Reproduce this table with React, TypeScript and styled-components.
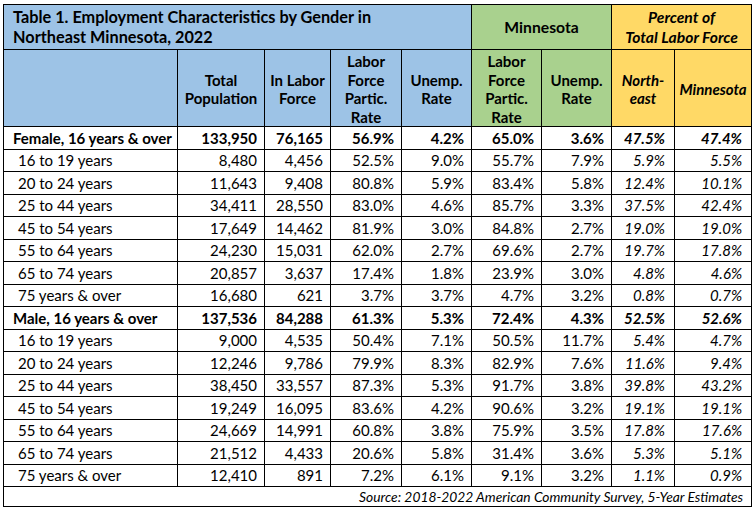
import React from "react";
import styled, { createGlobalStyle } from "styled-components";

const GlobalStyle = createGlobalStyle`
  html, body { margin: 0; padding: 0; background: #ffffff; }
  body { font-family: Lato, "Liberation Sans", sans-serif; color: #000; }
`;

const BLUE = "#9dc3e6";
const GREEN = "#a9d18e";
const YELLOW = "#ffd966";

const Page = styled.div`
  padding: 4px 0 0 3px;
`;

const Table = styled.table`
  border-collapse: collapse;
  table-layout: fixed;
  width: 749px;
  font-family: Lato, "Liberation Sans", sans-serif;
  font-size: 15px;
  color: #000;
`;

const TitleRow = styled.tr`
  height: 45px;
`;

const HeadRow = styled.tr`
  height: 76px;
`;

const DataRow = styled.tr`
  height: 22.5px;
`;

const SourceRow = styled.tr`
  height: 19.5px;
`;

type Tone = "blue" | "green" | "yellow";
const toneColor = (t?: Tone) =>
  t === "blue" ? BLUE : t === "green" ? GREEN : t === "yellow" ? YELLOW : "#fff";

const TitleCell = styled.th<{ $tone: Tone; $align?: "left" | "center"; $italic?: boolean }>`
  background: ${(p) => toneColor(p.$tone)};
  border: 1px solid #000;
  text-align: ${(p) => p.$align ?? "center"};
  vertical-align: middle;
  font-weight: 700;
  font-style: ${(p) => (p.$italic ? "italic" : "normal")};
  font-size: ${(p) => (p.$align === "left" ? "16.3px" : "15.7px")};
  line-height: 20.5px;
  padding: 0 0 0 ${(p) => (p.$align === "left" ? "9px" : "0")};
`;

const HeadCell = styled.th<{ $tone: Tone; $italic?: boolean }>`
  background: ${(p) => toneColor(p.$tone)};
  border: 1px solid #000;
  text-align: center;
  vertical-align: middle;
  font-weight: 700;
  font-style: ${(p) => (p.$italic ? "italic" : "normal")};
  line-height: 18.5px;
  padding: 2px 2px 0;
`;

const LabelCell = styled.td<{ $bold?: boolean }>`
  border: 1px solid #000;
  text-align: left;
  white-space: nowrap;
  font-weight: ${(p) => (p.$bold ? 700 : 400)};
  padding: 0 0 0 ${(p) => (p.$bold ? "9px" : "14px")};
`;

const NumCell = styled.td<{ $bold?: boolean; $italic?: boolean }>`
  border: 1px solid #000;
  text-align: right;
  white-space: nowrap;
  font-weight: ${(p) => (p.$bold ? 700 : 400)};
  font-style: ${(p) => (p.$italic ? "italic" : "normal")};
  padding: 0 ${(p) => (p.$italic ? "9px" : "7px")} 0 0;
`;

const SourceCell = styled.td`
  border: 1px solid #000;
  text-align: right;
  font-style: italic;
  font-size: 13.8px;
  padding: 0 8px 0 0;
`;

type Row = { label: string; total: boolean; v: string[] };

const raw: [string, string][] = [
  ["Female, 16 years & over", "133,950|76,165|56.9%|4.2%|65.0%|3.6%|47.5%|47.4%"],
  ["16 to 19 years", "8,480|4,456|52.5%|9.0%|55.7%|7.9%|5.9%|5.5%"],
  ["20 to 24 years", "11,643|9,408|80.8%|5.9%|83.4%|5.8%|12.4%|10.1%"],
  ["25 to 44 years", "34,411|28,550|83.0%|4.6%|85.7%|3.3%|37.5%|42.4%"],
  ["45 to 54 years", "17,649|14,462|81.9%|3.0%|84.8%|2.7%|19.0%|19.0%"],
  ["55 to 64 years", "24,230|15,031|62.0%|2.7%|69.6%|2.7%|19.7%|17.8%"],
  ["65 to 74 years", "20,857|3,637|17.4%|1.8%|23.9%|3.0%|4.8%|4.6%"],
  ["75 years & over", "16,680|621|3.7%|3.7%|4.7%|3.2%|0.8%|0.7%"],
  ["Male, 16 years & over", "137,536|84,288|61.3%|5.3%|72.4%|4.3%|52.5%|52.6%"],
  ["16 to 19 years", "9,000|4,535|50.4%|7.1%|50.5%|11.7%|5.4%|4.7%"],
  ["20 to 24 years", "12,246|9,786|79.9%|8.3%|82.9%|7.6%|11.6%|9.4%"],
  ["25 to 44 years", "38,450|33,557|87.3%|5.3%|91.7%|3.8%|39.8%|43.2%"],
  ["45 to 54 years", "19,249|16,095|83.6%|4.2%|90.6%|3.2%|19.1%|19.1%"],
  ["55 to 64 years", "24,669|14,991|60.8%|3.8%|75.9%|3.5%|17.8%|17.6%"],
  ["65 to 74 years", "21,512|4,433|20.6%|5.8%|31.4%|3.6%|5.3%|5.1%"],
  ["75 years & over", "12,410|891|7.2%|6.1%|9.1%|3.2%|1.1%|0.9%"],
];

const rows: Row[] = raw.map(([label, vals]) => ({
  label,
  total: label.includes("16 years & over"),
  v: vals.split("|"),
}));

const widths = [174, 87, 66, 71, 70, 70, 70, 63, 77];

export default function App() {
  return (
    <>
      <GlobalStyle />
      <Page>
        <Table>
          <colgroup>
            {widths.map((w, i) => (
              <col key={i} style={{ width: w }} />
            ))}
          </colgroup>
          <thead>
            <TitleRow>
              <TitleCell $tone="blue" $align="left" colSpan={5}>
                Table 1. Employment Characteristics by Gender in
                <br />
                Northeast Minnesota, 2022
              </TitleCell>
              <TitleCell $tone="green" colSpan={2}>
                Minnesota
              </TitleCell>
              <TitleCell $tone="yellow" $italic colSpan={2}>
                Percent of
                <br />
                Total Labor Force
              </TitleCell>
            </TitleRow>
            <HeadRow>
              <HeadCell $tone="blue" />
              <HeadCell $tone="blue">
                Total
                <br />
                Population
              </HeadCell>
              <HeadCell $tone="blue">
                In Labor
                <br />
                Force
              </HeadCell>
              <HeadCell $tone="blue">
                Labor
                <br />
                Force
                <br />
                Partic.
                <br />
                Rate
              </HeadCell>
              <HeadCell $tone="blue">
                Unemp.
                <br />
                Rate
              </HeadCell>
              <HeadCell $tone="green">
                Labor
                <br />
                Force
                <br />
                Partic.
                <br />
                Rate
              </HeadCell>
              <HeadCell $tone="green">
                Unemp.
                <br />
                Rate
              </HeadCell>
              <HeadCell $tone="yellow" $italic>
                North-
                <br />
                east
              </HeadCell>
              <HeadCell $tone="yellow" $italic>
                Minnesota
              </HeadCell>
            </HeadRow>
          </thead>
          <tbody>
            {rows.map((r, i) => (
              <DataRow key={i}>
                <LabelCell $bold={r.total}>{r.label}</LabelCell>
                {r.v.map((val, j) => (
                  <NumCell key={j} $bold={r.total} $italic={j >= 6}>
                    {val}
                  </NumCell>
                ))}
              </DataRow>
            ))}
            <SourceRow>
              <SourceCell colSpan={9}>
                Source: 2018-2022 American Community Survey, 5-Year Estimates
              </SourceCell>
            </SourceRow>
          </tbody>
        </Table>
      </Page>
    </>
  );
}
